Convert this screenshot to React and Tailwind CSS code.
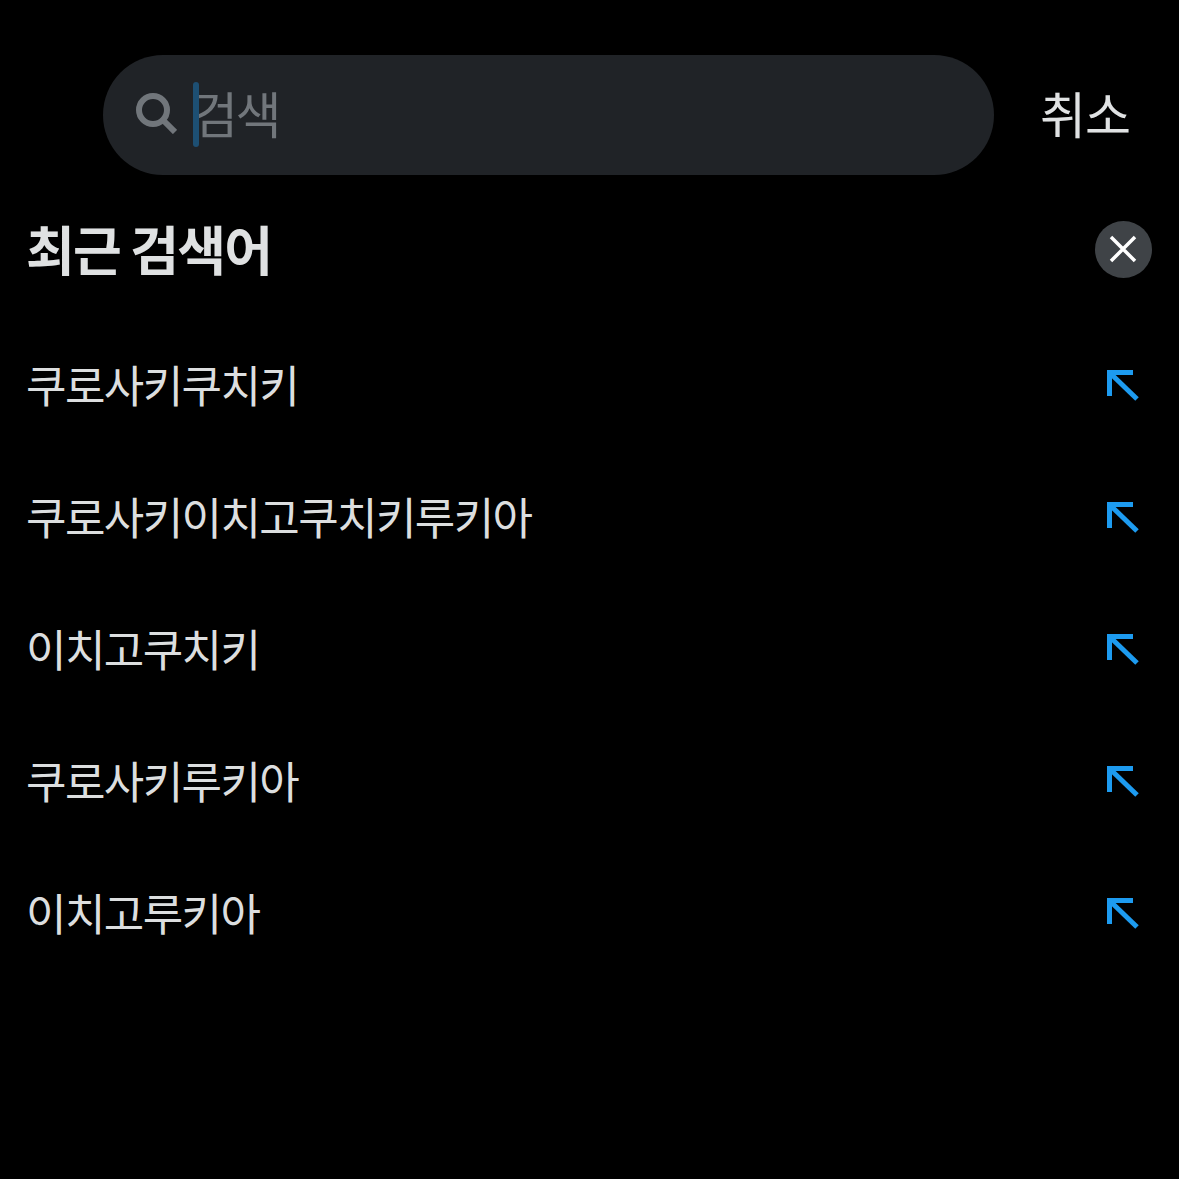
const FONT = "font-['Noto_Sans_CJK_KR','Noto_Sans',sans-serif]";

const searches = [
    "쿠로사키쿠치키",
    "쿠로사키이치고쿠치키루키아",
    "이치고쿠치키",
    "쿠로사키루키아",
    "이치고루키아",
];

function ArrowUpLeft() {
    return (
        <svg width="36" height="36" viewBox="0 0 36 36" fill="none" stroke="#1d9bf0" strokeWidth="5">
            <path d="M5.5 29V5.5H29" />
            <path d="M6 6L33 32" />
        </svg>
    );
}

function App() {
    return (
        <div className={`w-[1179px] h-[1179px] bg-black overflow-hidden ${FONT}`}>
            {/* Search bar */}
            <div className="flex items-center pt-[55px] pl-[103px]">
                <div className="w-[891px] h-[120px] rounded-[60px] bg-[#202327] flex items-center pl-[33px]">
                    <svg className="mb-[3px]" width="41" height="41" viewBox="0 0 41 41" fill="none" stroke="#71767b" strokeWidth="6">
                        <circle cx="17" cy="17" r="14" />
                        <path d="M27 27L39 39" />
                    </svg>
                    <div className="relative ml-[16px] mb-[6px] text-[50px] leading-none text-[#71767b] tracking-[-2.5px]">
                        <span className="absolute left-0 top-[-5px] w-[6px] h-[65px] rounded-full bg-[#1d4f73]" />
                        <span className="-ml-[1px]">검색</span>
                    </div>
                </div>
                <span className="ml-[46px] mb-[6px] text-[50px] leading-none text-[#e0e2e3] tracking-[-1px]">취소</span>
            </div>

            {/* Recent header */}
            <div className="flex items-center justify-between pl-[26px] pr-[27px] mt-[46px]">
                <h2 className="mb-[3px] text-[53px] leading-none font-bold text-[#dfe1e2] tracking-[-1.75px]">최근 검색어</h2>
                <div className="w-[57px] h-[57px] rounded-full bg-[#3f4347] flex items-center justify-center">
                    <svg className="mr-[1px] mb-[1px]" width="28" height="28" viewBox="0 0 28 28" stroke="#ffffff" strokeWidth="3.5">
                        <path d="M2 2L26 26M26 2L2 26" />
                    </svg>
                </div>
            </div>

            {/* Recent list */}
            <div className="flex flex-col mt-[41px]">
                {searches.map((item, index) => (
                    <div key={index} className="h-[132px] flex items-center justify-between pl-[26px] pr-[39px]">
                        <span className="mb-[3px] text-[44px] leading-none text-[#dcdedf] tracking-[-1.6px]">{item}</span>
                        <ArrowUpLeft />
                    </div>
                ))}
            </div>
        </div>
    );
}

export default App;
